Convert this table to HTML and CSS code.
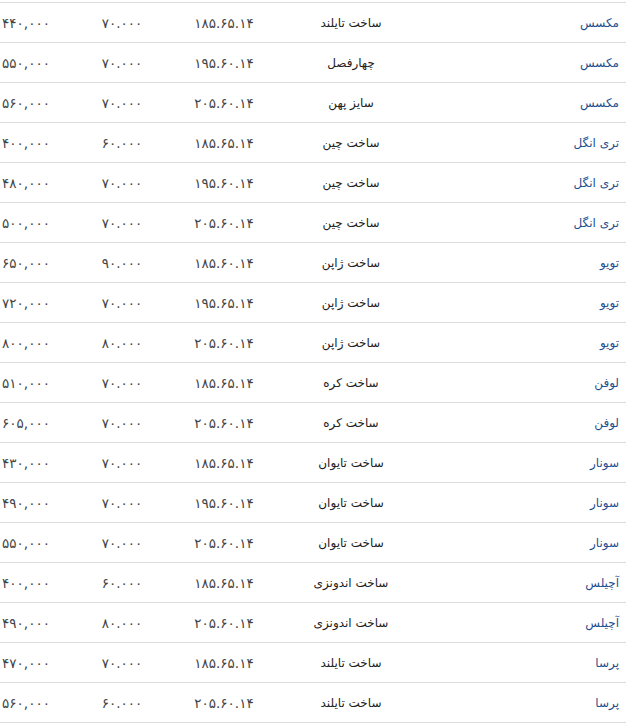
FILE: index.html
```html
<!DOCTYPE html>
<html dir="rtl">
<head>
<meta charset="utf-8">
<title>قیمت لاستیک</title>
<link rel="stylesheet" href="styles.css">
</head>
<body>
<div class="price-table">
  <div class="row"><a class="brand">مکسس</a><span class="desc">ساخت تایلند</span><span class="num size">۱۸۵.۶۵.۱۴</span><span class="num qty">۷۰.۰۰۰</span><span class="num price">۴۴۰,۰۰۰</span></div>
  <div class="row"><a class="brand">مکسس</a><span class="desc">چهارفصل</span><span class="num size">۱۹۵.۶۰.۱۴</span><span class="num qty">۷۰.۰۰۰</span><span class="num price">۵۵۰,۰۰۰</span></div>
  <div class="row"><a class="brand">مکسس</a><span class="desc">سایز پهن</span><span class="num size">۲۰۵.۶۰.۱۴</span><span class="num qty">۷۰.۰۰۰</span><span class="num price">۵۶۰,۰۰۰</span></div>
  <div class="row"><a class="brand">تری انگل</a><span class="desc">ساخت چین</span><span class="num size">۱۸۵.۶۵.۱۴</span><span class="num qty">۶۰.۰۰۰</span><span class="num price">۴۰۰,۰۰۰</span></div>
  <div class="row"><a class="brand">تری انگل</a><span class="desc">ساخت چین</span><span class="num size">۱۹۵.۶۰.۱۴</span><span class="num qty">۷۰.۰۰۰</span><span class="num price">۴۸۰,۰۰۰</span></div>
  <div class="row"><a class="brand">تری انگل</a><span class="desc">ساخت چین</span><span class="num size">۲۰۵.۶۰.۱۴</span><span class="num qty">۷۰.۰۰۰</span><span class="num price">۵۰۰,۰۰۰</span></div>
  <div class="row"><a class="brand">تویو</a><span class="desc">ساخت ژاپن</span><span class="num size">۱۸۵.۶۰.۱۴</span><span class="num qty">۹۰.۰۰۰</span><span class="num price">۶۵۰,۰۰۰</span></div>
  <div class="row"><a class="brand">تویو</a><span class="desc">ساخت ژاپن</span><span class="num size">۱۹۵.۶۵.۱۴</span><span class="num qty">۷۰.۰۰۰</span><span class="num price">۷۲۰,۰۰۰</span></div>
  <div class="row"><a class="brand">تویو</a><span class="desc">ساخت ژاپن</span><span class="num size">۲۰۵.۶۰.۱۴</span><span class="num qty">۸۰.۰۰۰</span><span class="num price">۸۰۰,۰۰۰</span></div>
  <div class="row"><a class="brand">لوفن</a><span class="desc">ساخت کره</span><span class="num size">۱۸۵.۶۵.۱۴</span><span class="num qty">۷۰.۰۰۰</span><span class="num price">۵۱۰,۰۰۰</span></div>
  <div class="row"><a class="brand">لوفن</a><span class="desc">ساخت کره</span><span class="num size">۲۰۵.۶۰.۱۴</span><span class="num qty">۷۰.۰۰۰</span><span class="num price">۶۰۵,۰۰۰</span></div>
  <div class="row"><a class="brand">سونار</a><span class="desc">ساخت تایوان</span><span class="num size">۱۸۵.۶۵.۱۴</span><span class="num qty">۷۰.۰۰۰</span><span class="num price">۴۳۰,۰۰۰</span></div>
  <div class="row"><a class="brand">سونار</a><span class="desc">ساخت تایوان</span><span class="num size">۱۹۵.۶۰.۱۴</span><span class="num qty">۷۰.۰۰۰</span><span class="num price">۴۹۰,۰۰۰</span></div>
  <div class="row"><a class="brand">سونار</a><span class="desc">ساخت تایوان</span><span class="num size">۲۰۵.۶۰.۱۴</span><span class="num qty">۷۰.۰۰۰</span><span class="num price">۵۵۰,۰۰۰</span></div>
  <div class="row"><a class="brand">آچیلس</a><span class="desc">ساخت اندونزی</span><span class="num size">۱۸۵.۶۵.۱۴</span><span class="num qty">۶۰.۰۰۰</span><span class="num price">۴۰۰,۰۰۰</span></div>
  <div class="row"><a class="brand">آچیلس</a><span class="desc">ساخت اندونزی</span><span class="num size">۲۰۵.۶۰.۱۴</span><span class="num qty">۸۰.۰۰۰</span><span class="num price">۴۹۰,۰۰۰</span></div>
  <div class="row"><a class="brand">پرسا</a><span class="desc">ساخت تایلند</span><span class="num size">۱۸۵.۶۵.۱۴</span><span class="num qty">۷۰.۰۰۰</span><span class="num price">۴۷۰,۰۰۰</span></div>
  <div class="row"><a class="brand">پرسا</a><span class="desc">ساخت تایلند</span><span class="num size">۲۰۵.۶۰.۱۴</span><span class="num qty">۶۰.۰۰۰</span><span class="num price">۵۶۰,۰۰۰</span></div>
</div>
</body>
</html>
```

FILE: styles.css
```css
html, body {
  margin: 0;
  padding: 0;
  background: #ffffff;
}

body {
  font-family: "DejaVu Sans", sans-serif;
  font-size: 12px;
  color: #222;
  direction: rtl;
}

.price-table {
  margin-top: 2px;
  border-top: 1px solid #dcdcdc;
  width: 626px;
}

.row {
  display: grid;
  grid-template-columns: 180px 190px 64px 140px 52px;
  height: 40px;
  box-sizing: border-box;
  border-bottom: 1px solid #dcdcdc;
  align-items: center;
}

.row > * {
  white-space: nowrap;
}

.brand {
  color: #1f4f8f;
  text-decoration: none;
  text-align: right;
  padding-right: 7px;
}

.desc {
  text-align: center;
  color: #222;
}

.num {
  text-align: center;
  color: #444;
  direction: ltr;
  unicode-bidi: isolate;
  font-size: 13.5px;
}
```
